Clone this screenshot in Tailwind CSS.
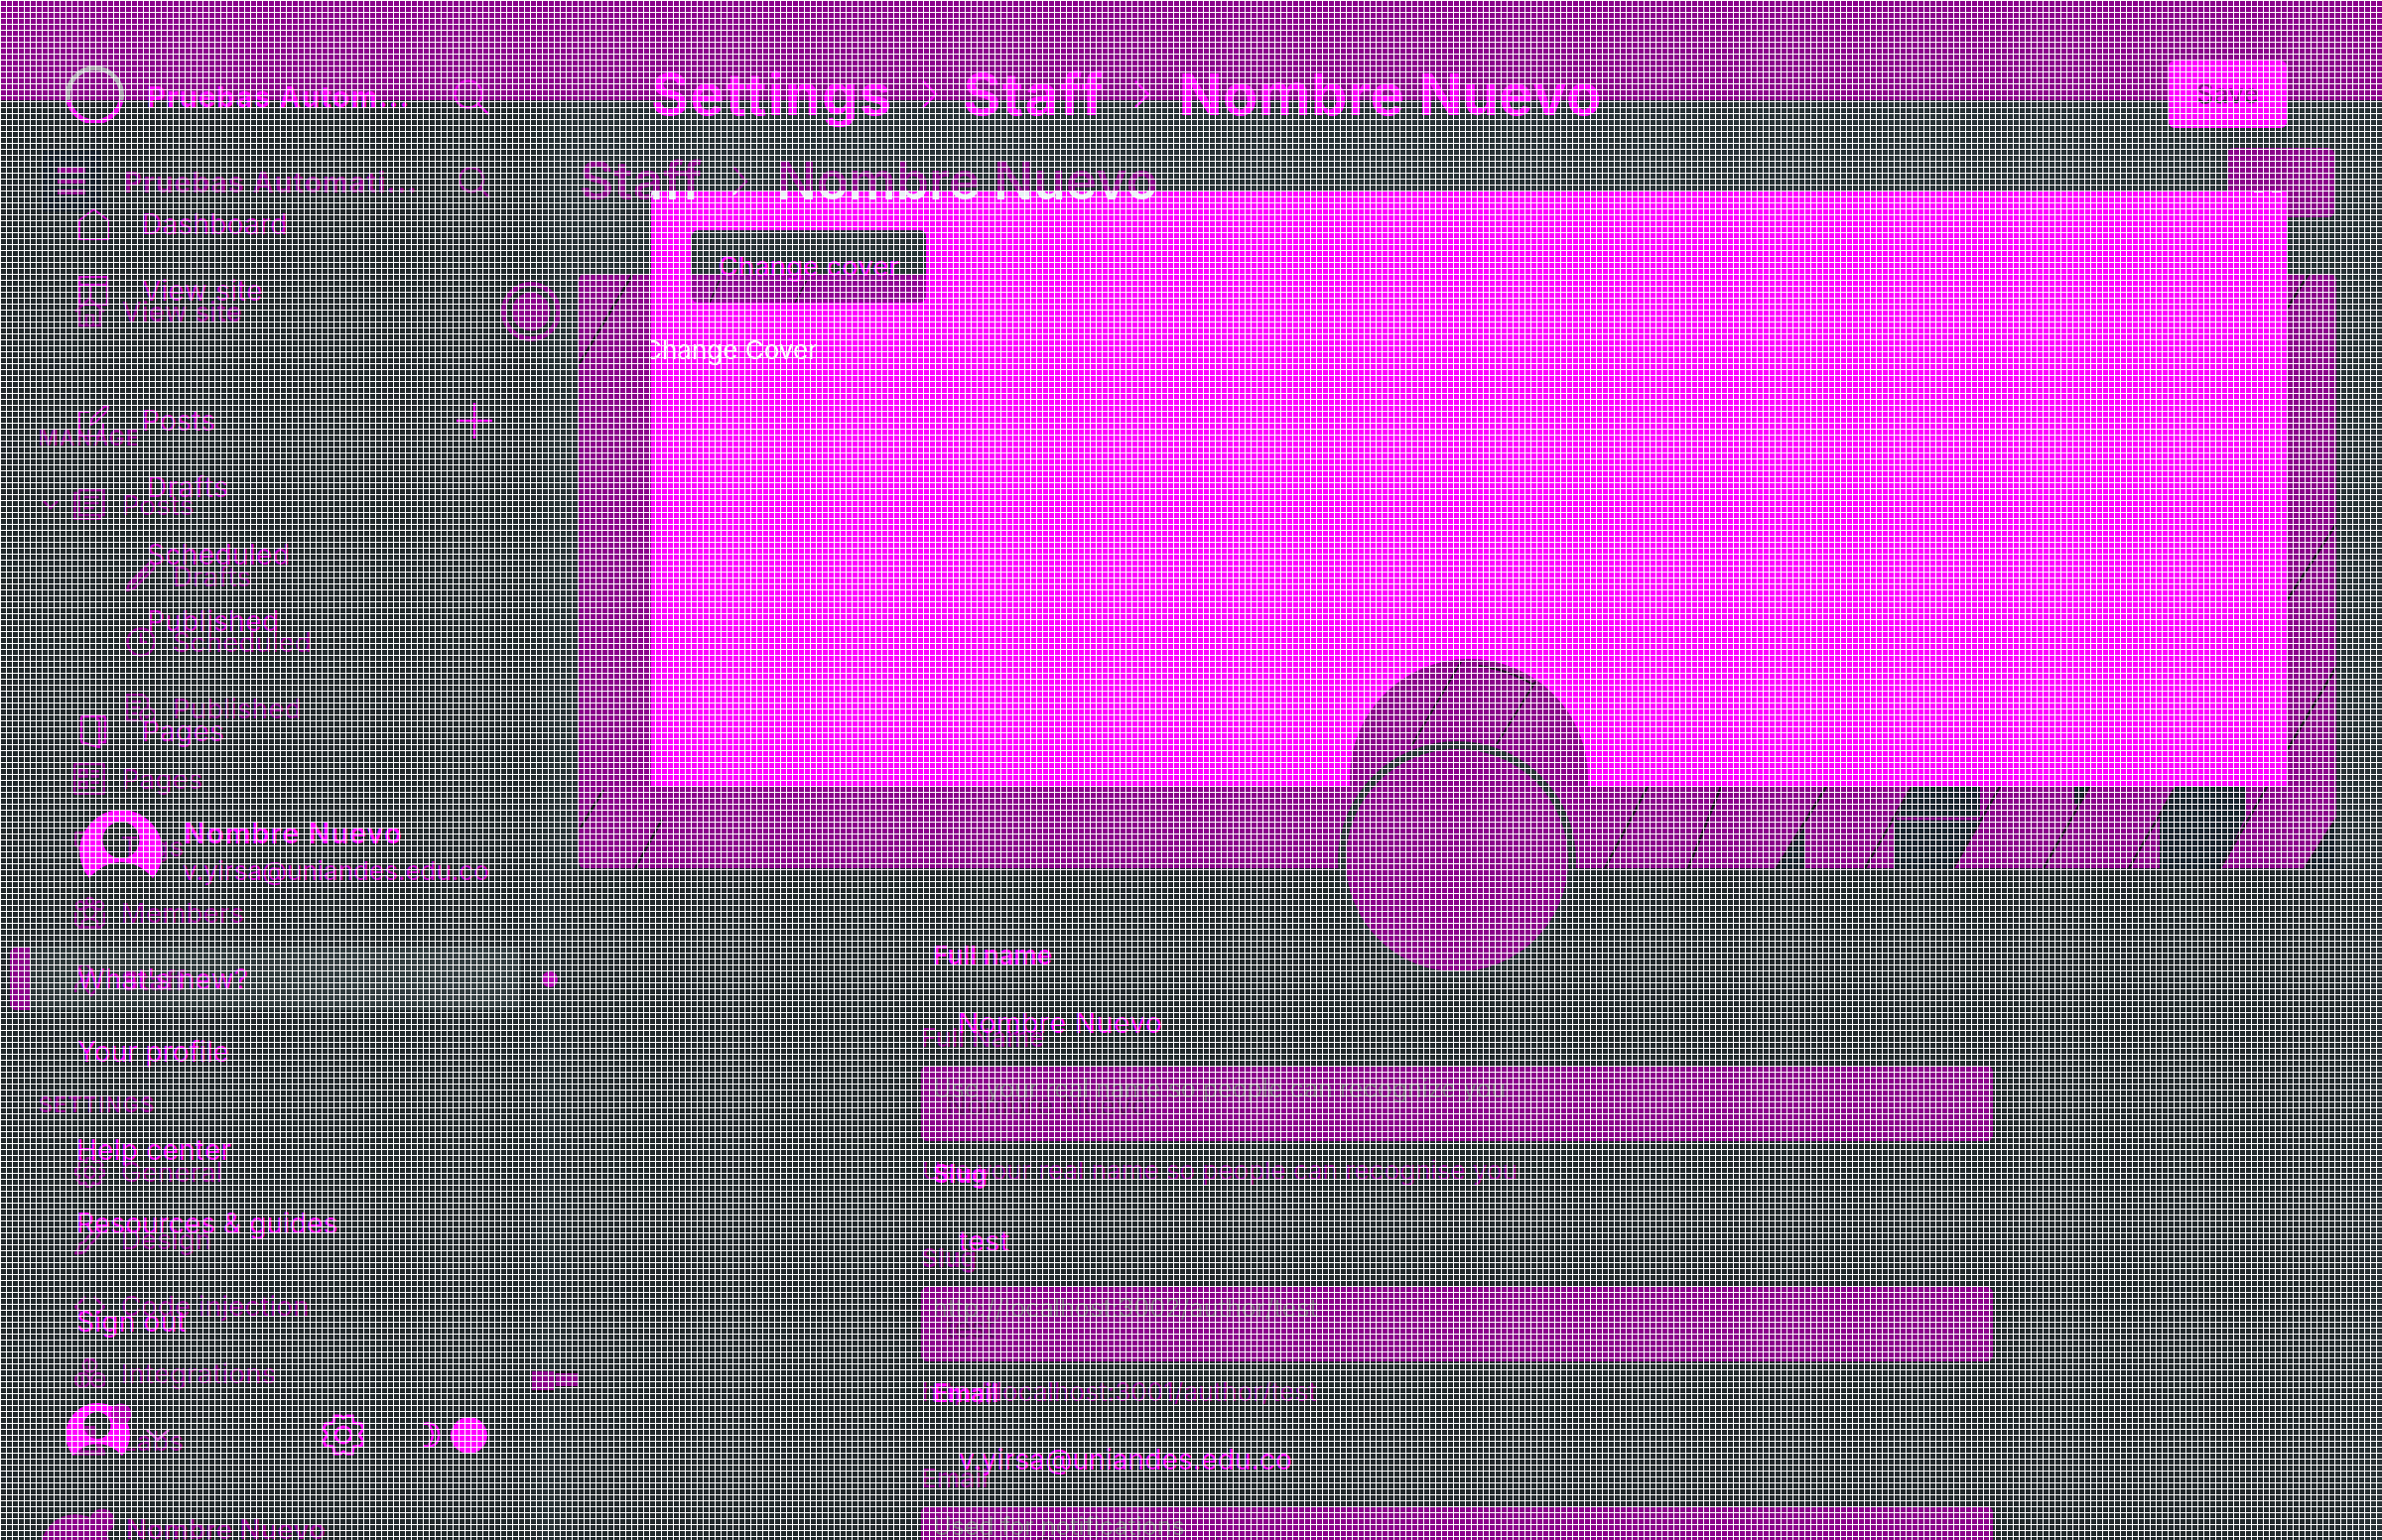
<!DOCTYPE html>
<html lang="es">
<head>
<meta charset="utf-8">
<title>Settings - Staff - Nombre Nuevo</title>
<script src="https://cdn.jsdelivr.net/npm/@tailwindcss/browser@4"></script>
</head>
<body class="bg-[#22292c]">
<div class="relative w-[2400px] h-[1552px] overflow-hidden bg-[#22292c] font-['Inter',sans-serif] whitespace-nowrap">

  <!-- backgrounds -->
  <div class="absolute inset-0 flex flex-col">
    <div class="h-[101px] bg-[#8b008b]"></div>
    <div class="h-[774px] flex">
      <div class="w-[530px]"></div>
      <div class="w-[30px] bg-linear-to-r from-[#22292c] to-[#283236]"></div>
      <div class="flex-1 bg-[#283236]"></div>
    </div>
    <div class="flex-1 flex">
      <div class="w-[525px]"></div>
      <div class="w-[25px] bg-linear-to-r from-[#22292c] to-[#293337]"></div>
      <div class="w-[35px] bg-linear-to-r from-[#293337] to-[#22292c]"></div>
      <div class="flex-1"></div>
      <div class="w-[60px] bg-linear-to-r from-[#22292c] to-[#283236]"></div>
    </div>
  </div>

  <!-- first version: cover -->
  <svg class="absolute left-[583px] top-[276px]" width="1771" height="599" viewBox="583 276 1771 599" fill="none">
    <rect x="583" y="276" width="1771" height="599" rx="6" fill="#8b008b"/>
    <path d="M1926 793H1995V827L1968 875H1909V827ZM2192 793H2262V825L2238 875H2176V820ZM2090 793H2105L2094 810H2090ZM1818 833V875H1790ZM2354 825V875H2322Z" fill="#17222c"/>
    <path d="M1911 825H1996" stroke="#8b008b" stroke-width="3"/>
    <path d="M1660 793L1617 875M1734 793L1701 875M1840 793L1790 875M1926 793L1879 875M2015 793L1968 875M2105 793L2059 875M2192 793L2145 875M2284 793L2237 875M2354 825L2322 875M2354 672L2305 755M2354 528L2305 604M2326 276L2305 310M667 826L640 875M608 796L585 834M637 277L584 366" stroke="#1b1220" stroke-width="2.5"/>
  </svg>

  <!-- first version: sidebar -->
  <div class="absolute left-[43px] top-[152px] w-[60px] h-[61px] bg-[#16202b] pl-[15px] pt-[17px] flex flex-col gap-[6px]">
    <div class="w-[28px] h-[5px] bg-[#8b008b]"></div><div class="w-[28px] h-[5px] bg-[#8b008b]"></div><div class="w-[28px] h-[5px] bg-[#8b008b]"></div>
  </div>
  <div class="absolute left-[10px] top-[955px] w-[515px] h-[63px] rounded-[6px] bg-[#313c3f] overflow-hidden flex"><div class="w-[20px] bg-[#8b008b]"></div><div class="flex-1 bg-linear-to-r from-[#2d3739] to-[#333e41]"></div></div>
  <nav class="absolute left-0 top-0 w-[582px] flex flex-col pt-[169px] text-[#900090] text-[27.5px] tracking-[0.2px] leading-[30px] [&_svg]:shrink-0 [&_svg]:fill-none [&_svg]:stroke-[#8b008b] [&_svg]:stroke-[2.6]">
    <div class="h-[30px] flex items-center pl-[125px]"><span class="w-[337px] font-bold text-[28px] tracking-[1.2px]">Pruebas Automati...</span>
      <svg width="32" height="32" viewBox="0 0 32 32"><circle cx="13" cy="13" r="12"/><path d="M22 22L31 31"/></svg></div>
    <div class="h-[30px] mt-[100px] flex items-center pl-[75px] gap-[48px]"><div class="flex items-center gap-[17px] w-[380px]"><svg width="31" height="31" viewBox="0 0 31 31"><path d="M1 15L15 2L30 15M5 12V29H26V12M12 29V19H19V29"/></svg><span class="font-medium">View site</span></div>
      <svg width="64" height="64" viewBox="0 0 64 64"><circle cx="32" cy="32" r="27.500" class="stroke-[5]!"/><circle cx="32" cy="32" r="18" class="fill-[#8b008b]"/></svg></div>
    <div class="h-[30px] mt-[96.5px] pl-[39px] text-[21.5px] font-semibold tracking-[1px]">MANAGE</div>
    <div class="h-[30px] mt-[38px] flex items-center pl-[43px]"><svg width="16" height="10" viewBox="0 0 16 10"><path d="M1 1L8 8L15 1"/></svg><svg class="ml-[15px] mr-[17px]" width="32" height="31" viewBox="0 0 31 31"><path d="M5 1H30V26H5ZM5 4H1V30H26V26M10 8H25M10 14H25M10 19H20"/></svg>Posts</div>
    <div class="h-[30px] mt-[42.5px] flex items-center pl-[127px] gap-[17px]"><svg width="30" height="30" viewBox="0 0 30 30"><path d="M1 29L3 22L23 2Q26 0 28 3Q30 5 27 8L8 27ZM5 24L22 7"/></svg>Drafts</div>
    <div class="h-[30px] mt-[36px] flex items-center pl-[127px] gap-[17px]"><svg width="30" height="30" viewBox="0 0 30 30"><circle cx="15" cy="15" r="13.5"/><path d="M15 6V15H21"/></svg>Scheduled</div>
    <div class="h-[30px] mt-[36.5px] flex items-center pl-[127px] gap-[17px]"><svg width="30" height="30" viewBox="0 0 30 30"><path d="M13 27H1V1H17L22 6V13M5 8H15M5 14H14M5 20H11"/><circle cx="22" cy="22" r="7.5"/><path d="M19 22L21 24L25 20"/></svg>Published</div>
    <div class="h-[30px] mt-[41.5px] flex items-center pl-[74px] gap-[17px]"><svg width="32" height="32" viewBox="0 0 31 31"><rect x="1" y="1" width="29" height="29" rx="2"/><path d="M6 7H13V13H6ZM17 8H25M17 13H25M6 18H13V24H6ZM17 19H25M17 24H22"/></svg>Pages</div>
    <div class="h-[30px] mt-[38px] flex items-center pl-[75px] gap-[16px]"><svg width="31" height="31" viewBox="0 0 31 31"><path d="M1 3Q1 1 3 1L14 1L29 16L17 29L1 13Z"/></svg>Tags</div>
    <div class="h-[30px] mt-[37px] flex items-center pl-[75px] gap-[16px]"><svg width="31" height="36" viewBox="0 0 31 31"><circle cx="15.500" cy="15" r="6"/><circle cx="15.500" cy="4" r="3.500"/><circle cx="6" cy="8" r="4"/><circle cx="25" cy="8" r="4"/><path d="M1 15V26L5 30H26L30 26V15M8 30V24Q15 18 23 24V30"/></svg>Members</div>
    <div class="h-[30px] mt-[38px] flex items-center pl-[75px] gap-[16px]"><svg width="31" height="31" viewBox="0 0 31 31"><circle cx="10" cy="5" r="6"/><path d="M1 27V22Q5 13 14 16M12 24L17 30L21 25"/></svg><span class="font-semibold">Staff</span></div>
    <div class="h-[30px] mt-[95px] pl-[39px] text-[21.5px] font-semibold tracking-[1.2px]">SETTINGS</div>
    <div class="h-[30px] mt-[38px] flex items-center pl-[75px] gap-[16px]"><svg width="31" height="31" viewBox="0 0 31 31"><circle cx="15.500" cy="15.500" r="5.500"/><path d="M13 1H18L20 5L25 4L28 8L26 12L30 14V18L26 20L27 25L23 28L19 26L17 30H13L11 26L6 27L3 23L5 19L1 17V13L5 11L4 6L8 3L12 5Z"/></svg>General</div>
    <div class="h-[30px] mt-[38px] flex items-center pl-[75px] gap-[16px]"><svg width="31" height="31" viewBox="0 0 31 31"><path d="M10 18Q15 8 29 1Q26 12 15 21M10 18Q5 18 4 23T1 29Q12 30 15 21"/></svg>Design</div>
    <div class="h-[30px] mt-[37px] flex items-center pl-[75px] gap-[16px]"><svg width="31" height="31" viewBox="0 0 31 31"><path d="M11 6L1 16L11 26M20 6L30 16L20 26"/></svg>Code injection</div>
    <div class="h-[30px] mt-[38px] flex items-center pl-[75px] gap-[16px]"><svg width="31" height="31" viewBox="0 0 31 31"><circle cx="15.500" cy="7" r="6.500"/><circle cx="8" cy="22" r="7"/><circle cx="24" cy="22" r="7"/><path d="M15 2V12M8 17V27M20 22H28"/></svg>Integrations</div>
    <div class="h-[30px] mt-[38px] flex items-center pl-[75px] gap-[16px]"><svg width="31" height="31" viewBox="0 0 31 31"><path d="M9 1H22M12 1V12L3 27H29L19 12V1" stroke-width="5"/></svg>Labs</div>
    <div class="h-[30px] mt-[59px] pl-[127px] font-semibold">Nombre Nuevo</div>
  </nav>
  <svg class="absolute left-[40px] top-[1518px]" width="80" height="34" viewBox="0 0 80 34"><circle cx="36" cy="43" r="35" fill="#8b008b"/><circle cx="63" cy="15" r="12.500" fill="#8b008b"/></svg>
  <div class="absolute left-[536px] top-[1382px] flex gap-[2px]"><div class="w-[22px] h-[21px] bg-[#8b008b] border-b-2 border-[#111]"></div><div class="w-[22px] h-[17px] bg-[#8b008b] border-y-2 border-[#111]"></div></div>

  <!-- first version: title and save -->
  <div class="absolute left-[584px] top-[147px] h-[70px] flex items-center text-[#8b008b] text-[53px] font-semibold leading-[70px] tracking-[0.1px]">Staff<svg class="ml-[30px] mr-[27px]" width="18" height="30" viewBox="0 0 18 30" fill="none" stroke="#8b008b" stroke-width="2.500"><path d="M2 1L15 16L2 29"/></svg>Nombre Nuevo</div>
  <div class="absolute left-[2244px] top-[149px] w-[108px] h-[70px] rounded-[6px] bg-[#8b008b]"></div>

  <!-- first version: form -->
  <div class="absolute left-[928px] top-[1031px] w-[1080px] flex flex-col text-[#900090] text-[26px] leading-[30px]">
    <div class="h-[30px] font-medium tracking-[0.2px]">Full Name</div>
    <div class="h-[76px] mt-[13px] rounded-[6px] bg-[#8b008b] text-[#5a065a] text-[28px] pl-[25px] pt-[25px] tracking-[0.4px]">Nombre Nuevo</div>
    <div class="h-[30px] mt-[15px] pl-px text-[26px]">Use your real name so people can recognise you</div>
    <div class="h-[30px] mt-[58px] font-semibold">Slug</div>
    <div class="h-[75px] mt-[14px] rounded-[6px] bg-[#8b008b] text-[#5a065a] text-[28px] pl-[25px] pt-[26px]">test</div>
    <div class="h-[30px] mt-[16px] pl-px text-[26px] tracking-[0.1px]">http://localhost:3001/author/test</div>
    <div class="h-[30px] mt-[57px] font-medium tracking-[0.2px]">Email</div>
    <div class="h-[76px] mt-[13px] rounded-[6px] bg-[#8b008b] text-[#5a065a] text-[28px] pl-[25px] pt-[26px]">v.yirsa@uniandes.edu.co</div>
  </div>

  <!-- second version: cover -->
  <div class="absolute left-[656px] top-[192px] w-[1649px] h-[601px] bg-[#ff00ff] overflow-hidden">
    <div class="absolute -left-[72px] -top-[45px] h-[70px] flex items-center text-[#e8f0f4] text-[53px] font-semibold leading-[70px] tracking-[0.1px]">Staff<svg class="ml-[30px] mr-[27px]" width="18" height="30" viewBox="0 0 18 30" fill="none" stroke="#e8f0f4" stroke-width="2.500"><path d="M2 1L15 16L2 29"/></svg>Nombre Nuevo</div>
    <div class="absolute left-[1615px] top-0 flex gap-[8px]"><div class="w-[10px] h-[2px] bg-white"></div><div class="w-[9px] h-[2px] bg-white"></div></div>
    <div class="absolute -left-[8px] top-[146px] text-white text-[26px] leading-[30px]">Change Cover</div>
    <div class="absolute left-[41px] top-[40px] w-[236px] h-[73px] rounded-[6px] bg-[linear-gradient(#283236_44px,#900094_44px)] flex items-center justify-center pt-[2px] text-[27px] font-medium text-[#f800f8] tracking-[0.2px]">Change cover
      <svg class="absolute left-0 top-0" width="236" height="73" viewBox="697 232 236 73" stroke="#1b1220" stroke-width="1.500"><path d="M725 282L715 305M813 282L801 305"/></svg></div>
    <svg class="absolute left-[704px] top-[472px]" width="240" height="129" viewBox="1360 664 240 129" fill="none"><circle cx="1480" cy="784" r="120" fill="#8b008b"/><path d="M1472 667L1422 752M1547 687L1508 750M1490 671Q1520 675 1545 690" stroke="#1b1220" stroke-width="2"/></svg>
  </div>
  <div class="absolute left-[1348px] top-[747px] size-[240px] rounded-full bg-[#8b008b] border-[8px] border-[#283236]"></div>

  <!-- second version: title and save -->
  <div class="absolute left-[656px] top-[59px] w-[1648px] h-[72px] flex items-center text-[#fa00fa] text-[58px] font-bold leading-[70px]"><span class="tracking-[1.2px]">Settings</span><svg class="ml-[28px] mr-[25px]" width="18" height="28" viewBox="0 0 18 28" fill="none" stroke="#f000f0" stroke-width="2.500"><path d="M2 1L15 14L2 27"/></svg><span class="tracking-[1.2px]">Staff</span><svg class="ml-[29px] mr-[27px]" width="18" height="28" viewBox="0 0 18 28" fill="none" stroke="#f000f0" stroke-width="2.500"><path d="M2 1L15 14L2 27"/></svg><span class="tracking-[0.3px]">Nombre Nuevo</span>
    <div class="ml-auto w-[119px] h-[68px] rounded-[6px] bg-[#ff00ff] flex items-center justify-center text-[27px] font-medium"><span class="text-transparent leading-[40px] bg-clip-text bg-[linear-gradient(#8b008b_26px,#22292c_26px)]">Save</span></div>
  </div>

  <!-- second version: sidebar -->
  <nav class="absolute left-0 top-0 w-[582px] flex flex-col pt-[78px] text-[#c400c4] text-[28px] tracking-[0.25px] leading-[40px] [&_svg]:shrink-0">
    <div class="h-[40px] flex items-center pl-[66px] font-bold text-[#fa00fa]">
      <svg class="relative -top-[4px]" width="60" height="60" viewBox="0 0 60 60" fill="none" stroke-width="5"><path d="M3 37A27 27 0 1 1 56 37" stroke="#a9a0ad"/><path d="M3 37A27 27 0 0 0 56 37" stroke="#e600e6"/></svg>
      <span class="ml-[22px] w-[309px] text-[29px] tracking-[1.1px]">Pruebas Autom...</span>
      <svg width="37" height="37" viewBox="0 0 37 37" fill="none" stroke="#e000e0" stroke-width="2.500"><circle cx="15" cy="15" r="13.500"/><path d="M25 25L35 35"/></svg></div>
    <div class="h-[40px] mt-[88px] flex items-center pl-[79px] gap-[33px]"><svg width="31" height="32" viewBox="0 0 31 32" fill="none" stroke="currentColor" stroke-width="2"><path d="M1 12L15.500 1L30 12V31H1Z"/></svg>Dashboard</div>
    <div class="h-[40px] mt-[27px] flex items-center pl-[79px] gap-[33px]"><svg width="31" height="30" viewBox="0 0 31 30" fill="none" stroke="currentColor" stroke-width="2.500"><path d="M1 1H29V29H1ZM1 9H29M12 10V23"/></svg>View site</div>
    <div class="h-[40px] mt-[91px] flex items-center pl-[79px] gap-[33px]"><svg width="31" height="32" viewBox="0 0 31 32" fill="none" stroke="currentColor" stroke-width="2"><path d="M12 7H1V31H25V19M12 20L14 13L26 2L30 1L29 6L18 17Z"/></svg><span class="w-[317px]">Posts</span><svg class="-ml-[33px]" width="36" height="36" viewBox="0 0 36 36" stroke="#f000f0" stroke-width="2.500"><path d="M0 18H36M18 0V36"/></svg></div>
    <div class="h-[40px] mt-[27px] pl-[148px] tracking-[0.5px]">Drafts</div>
    <div class="h-[40px] mt-[28px] pl-[148px] tracking-[0.4px]">Scheduled</div>
    <div class="h-[40px] mt-[27px] pl-[148px] tracking-[0.4px]">Published</div>
    <div class="h-[40px] mt-[71px] flex items-center pl-[79px] gap-[33px]"><svg width="31" height="34" viewBox="0 0 31 34" fill="none" stroke="currentColor" stroke-width="2.500"><path d="M22 28H27V4Q27 2 25 2H5Q3 2 3 4V26Q3 29 6 29L21 33V7Q21 5 17 4"/></svg>Pages</div>
    <div class="h-[84px] mt-[59px] flex pl-[80px] gap-[21px]">
      <svg width="84" height="84" viewBox="0 0 84 84" fill="#ff00ff" fill-rule="evenodd"><path d="M42 0A42 42 0 0 1 74 69Q60 53 42 53Q24 53 10 69A42 42 0 0 1 42 0ZM42 12A18 18 0 1 0 42 49A18 18 0 1 0 42 12Z"/></svg>
      <div class="pt-[6px] leading-[36px]"><div class="font-semibold text-[#ff00ff] text-[29px] tracking-[0.9px]">Nombre Nuevo</div><div class="text-[26px] mt-[2px] -ml-px tracking-normal">v.yirsa@uniandes.edu.co</div></div></div>
    <div class="h-[40px] mt-[67px] flex items-center pl-[78px] text-[#e000e0]"><span class="w-[468px]">What's new?</span><span class="size-[16px] rounded-full bg-[#b400b4]"></span></div>
    <div class="h-[40px] mt-[33px] pl-[78px] text-[#f400f4] tracking-normal">Your profile</div>
    <div class="h-[40px] mt-[59px] pl-[77px] text-[#f400f4]">Help center</div>
    <div class="h-[40px] mt-[34px] pl-[77px] text-[#f400f4] tracking-[0.1px]">Resources &amp; guides</div>
    <div class="h-[40px] mt-[59px] pl-[77px] text-[#f400f4]">Sign out</div>
    <div class="h-[64px] mt-[62px] flex items-center pl-[65px]">
      <svg width="70" height="64" viewBox="0 0 70 64"><path fill="#ff00ff" fill-rule="evenodd" d="M33 0A32 32 0 0 1 58 53Q47 41 33 41Q19 41 9 53A32 32 0 0 1 33 0ZM33 9A13.500 13.500 0 1 0 33 36A13.500 13.500 0 1 0 33 9Z"/><circle cx="57" cy="11" r="10.500" fill="#b000b0"/></svg>
      <svg class="ml-[12px]" width="24" height="12" viewBox="0 0 24 12" fill="none" stroke="#d050d0" stroke-width="2.500"><path d="M1 1L12 11L23 1"/></svg>
      <svg class="ml-[154px]" width="42" height="42" viewBox="0 0 42 42" fill="none" stroke="#ff00ff" stroke-width="3"><circle cx="21" cy="21" r="8"/><path d="M12 2L18 2L21 4L24 2L30 2L31 9L39 10L41 15L37 21L41 27L39 32L31 33L30 40L24 40L21 38L18 40L12 40L11 33L3 32L1 27L5 21L1 15L3 10L11 9Z"/></svg>
      <svg class="ml-[59px]" width="18" height="26" viewBox="0 0 18 26" fill="none" stroke="#ff00ff" stroke-width="2.500"><path d="M0 2Q16 -1 16 13Q16 27 0 24M6 3Q14 13 6 23"/></svg>
      <div class="ml-[10px] size-[37px] rounded-full bg-[#ff00ff]"></div>
    </div>
  </nav>

  <!-- second version: form -->
  <div class="absolute left-[940px] top-[948px] w-[1000px] flex flex-col text-[25px] leading-[30px] text-[#f800f8]">
    <div class="h-[30px] font-semibold text-[26px]">Full name</div>
    <div class="h-[30px] mt-[38px] pl-[25px] text-[28px] tracking-[0.6px]">Nombre Nuevo</div>
    <div class="h-[30px] mt-[36px] text-[#76607a]">Use your real name so people can recognize you</div>
    <div class="h-[30px] mt-[56px] font-bold">Slug</div>
    <div class="h-[30px] mt-[38px] pl-[26px] text-[28px] tracking-[0.6px]">test</div>
    <div class="h-[30px] mt-[37px] text-[#76607a] tracking-[0.1px]">http://localhost:3002/author/test</div>
    <div class="h-[30px] mt-[56px] font-bold">Email</div>
    <div class="h-[30px] mt-[37px] pl-[26px] text-[28px] tracking-[0.15px]">v.yirsa@uniandes.edu.co</div>
    <div class="h-[30px] mt-[37px] text-[#76607a]">Used for notifications</div>
  </div>

  <!-- pixel grid -->
  <div class="absolute inset-0 bg-[linear-gradient(to_right,#fff_1px,transparent_1px),linear-gradient(to_bottom,#fff_1px,transparent_1px)] [background-size:6px_6px]"></div>
</div>
</body>
</html>
